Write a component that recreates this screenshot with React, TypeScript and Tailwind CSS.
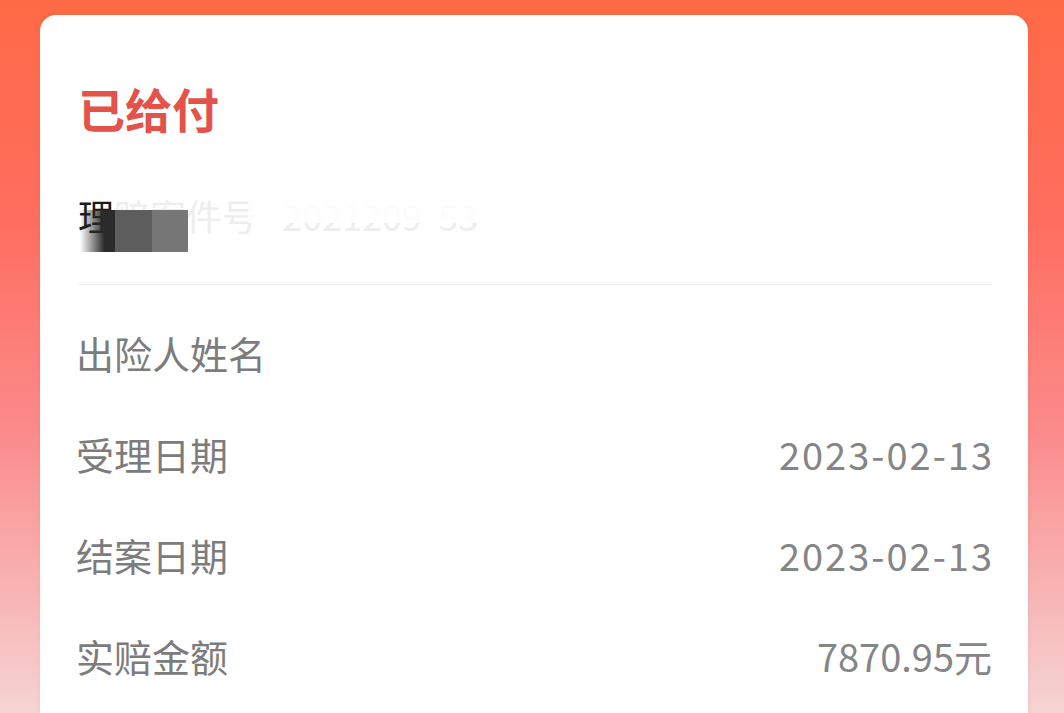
import React from "react";

const rows = [
  { label: "出险人姓名", value: "" },
  { label: "受理日期", value: "2023-02-13" },
  { label: "结案日期", value: "2023-02-13" },
  { label: "实赔金额", value: "7870.95元" },
];

export default function App() {
  return (
    <div
      className="w-[1064px] h-[713px] overflow-hidden px-[40px] pt-[15px] bg-[linear-gradient(180deg,#ff6a46_0%,#ff6d5e_30%,#fb8a8a_60%,#f6d4d4_100%)]"
      style={{ fontFamily: '"Noto Sans CJK SC", "Noto Sans", sans-serif' }}
    >
      <div className="w-[988px] h-[720px] bg-white rounded-t-[16px] pl-[38px] pr-[36px] pt-[69px] shadow-[0_0_6px_rgba(0,0,0,0.05)]">
        <h1 className="text-[47px] leading-none font-bold text-[#e4524a] h-[47px]">已给付</h1>

        <div className="relative mt-[66px] h-[36px] text-[36px] leading-none flex items-center">
          <span className="text-[#1a1a1a]">理</span>
          <span className="text-[#d6d6d6] opacity-40">赔案件号 &nbsp;&nbsp;2021209&nbsp;&nbsp;53</span>
          <div className="absolute left-[2px] top-[13px] h-[42px] flex">
            <div className="w-[35px] h-full bg-[linear-gradient(90deg,#ffffff00_0%,#2a2a2a_70%)]" />
            <div className="w-[37px] h-full bg-[#5d5d5d]" />
            <div className="w-[36px] h-full bg-[#777777]" />
          </div>
          <div className="absolute left-[170px] top-[-4px] w-[300px] h-[30px] bg-white/80" />
        </div>

        <div className="mt-[51px] h-px bg-[#eeeeee]" />

        <div className="mt-[17px]">
          {rows.map((r) => (
            <div key={r.label} className="h-[101px] flex items-center justify-between text-[38px] leading-none">
              <span className="text-[#7c7c7c] -ml-[2px]">{r.label}</span>
              <span className={r.value.includes("-") ? "text-[#858585] tracking-[2px] -mr-[2px]" : "text-[#858585]"}>
                {r.value}
              </span>
            </div>
          ))}
        </div>
      </div>
    </div>
  );
}
